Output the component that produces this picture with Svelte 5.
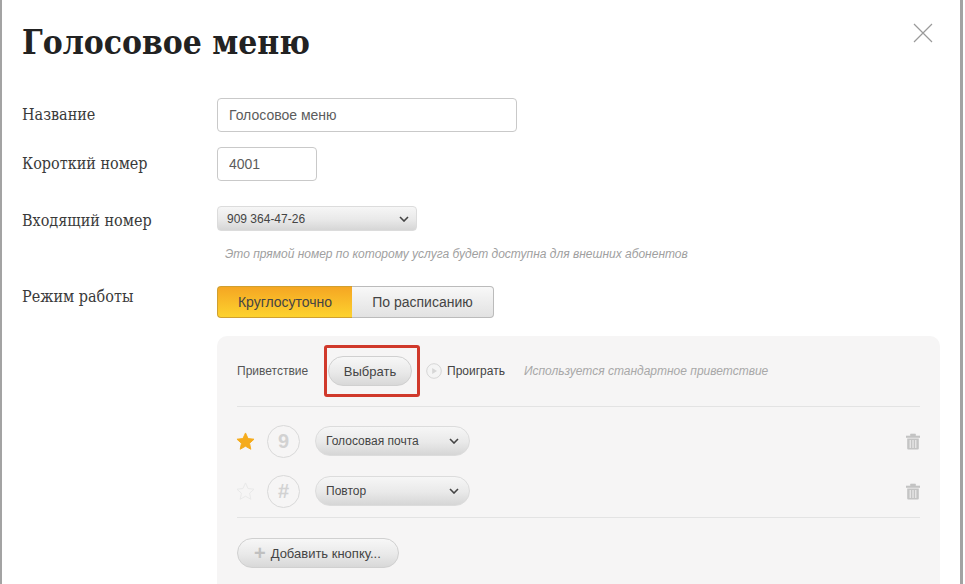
<script>
  const rows = [
    { key: '9', action: 'Голосовая почта', starred: true },
    { key: '#', action: 'Повтор', starred: false }
  ];
</script>

<div class="page">
  <div class="modal">
    <div class="head">
      <h1>Голосовое меню</h1>
      <svg class="close" width="20" height="20" viewBox="0 0 20 20">
        <path d="M1 1 L19 19 M19 1 L1 19" stroke="#9a9a9a" stroke-width="1.2" fill="none" />
      </svg>
    </div>

    <div class="field name">
      <span class="label">Название</span>
      <input class="input wide" value="Голосовое меню" />
    </div>
    <div class="field short">
      <span class="label">Короткий номер</span>
      <input class="input narrow" value="4001" />
    </div>
    <div class="field incoming">
      <span class="label">Входящий номер</span>
      <div class="select number">
        <span>909 364-47-26</span>
        <svg width="10" height="6" viewBox="0 0 10 6"><path d="M1 1 L5 5 L9 1" stroke="#444" stroke-width="1.6" fill="none" /></svg>
      </div>
    </div>
    <p class="hint">Это прямой номер по которому услуга будет доступна для внешних абонентов</p>

    <div class="field mode">
      <span class="label">Режим работы</span>
      <div class="segments">
        <span class="seg active">Круглосуточно</span>
        <span class="seg">По расписанию</span>
      </div>
    </div>

    <div class="panel">
      <div class="greeting">
        <span class="greet-label">Приветствие</span>
        <div class="highlight"><span class="pill choose">Выбрать</span></div>
        <svg class="play" width="16" height="16" viewBox="0 0 16 16">
          <circle cx="8" cy="8" r="7.3" fill="#f4f4f4" stroke="#d6d6d6" />
          <path d="M6.2 5 L11 8 L6.2 11 Z" fill="#d6d6d6" />
        </svg>
        <span class="play-label">Проиграть</span>
        <em class="note">Используется стандартное приветствие</em>
      </div>

      <div class="keys">
        {#each rows as row}
          <div class="key-row">
            <svg class="star" width="19" height="18" viewBox="0 0 20 19">
              <path
                d="M10 1 L12.7 6.9 L19 7.6 L14.3 11.9 L15.6 18.2 L10 15 L4.4 18.2 L5.7 11.9 L1 7.6 L7.3 6.9 Z"
                fill={row.starred ? '#f5ab1c' : 'none'}
                stroke={row.starred ? '#f5ab1c' : '#e8e8e8'}
              />
            </svg>
            <span class="digit">{row.key}</span>
            <div class="select action">
              <span>{row.action}</span>
              <svg width="10" height="6" viewBox="0 0 10 6"><path d="M1 1 L5 5 L9 1" stroke="#444" stroke-width="1.6" fill="none" /></svg>
            </div>
            <svg class="trash" width="14" height="17" viewBox="0 0 14 17">
              <path d="M0 3 H14 V4.5 H0 Z M4.5 3 V1 H9.5 V3" fill="#c4c4c4" stroke="#c4c4c4" stroke-width="0.6" />
              <path d="M1.2 5.5 H12.8 V15.5 Q12.8 16.6 11.7 16.6 H2.3 Q1.2 16.6 1.2 15.5 Z" fill="#c4c4c4" />
              <path d="M4.2 7 V15 M7 7 V15 M9.8 7 V15" stroke="#f5f4f4" stroke-width="1" />
            </svg>
          </div>
        {/each}
      </div>

      <div class="add-row">
        <span class="pill add"><b>+</b>Добавить кнопку...</span>
      </div>
    </div>
  </div>
</div>

<style>
  :global(body) {
    margin: 0;
    background: #fff;
  }

  .page {
    width: 965px;
    height: 584px;
    overflow: hidden;
    font-family: "Liberation Sans", Arial, sans-serif;
    color: #333;
  }

  .modal {
    box-sizing: border-box;
    width: 963px;
    height: 584px;
    border-left: 2px solid #a3a3a3;
    border-right: 3px solid #a3a3a3;
    padding-left: 20px;
  }

  .head {
    display: flex;
    justify-content: space-between;
    height: 86px;
  }

  h1 {
    margin: 21px 0 0;
    font-family: "DejaVu Serif Condensed", "DejaVu Serif", serif;
    font-size: 33.3px;
    line-height: 44px;
    font-weight: 700;
    color: #222;
  }

  .close {
    margin: 23px 27px 0 0;
  }

  .field {
    display: flex;
    align-items: center;
  }

  .label {
    width: 195px;
    font-family: "DejaVu Serif Condensed", "DejaVu Serif", serif;
    font-size: 16px;
    color: #3a3a3a;
  }

  .name {
    margin-top: 12px;
  }

  .name .label,
  .short .label {
    padding-bottom: 2px;
  }

  .short {
    margin-top: 15px;
  }

  .incoming {
    margin-top: 25px;
  }

  .incoming .label {
    padding-top: 3px;
  }

  .mode {
    margin-top: 24px;
    align-items: flex-start;
  }

  .mode .label {
    padding-top: 1px;
  }

  .input {
    box-sizing: border-box;
    height: 34px;
    padding: 0 11px;
    border: 1px solid #c9c9c9;
    border-radius: 4px;
    background: #fff;
    font: 14px "Liberation Sans", Arial, sans-serif;
    color: #5c5c5c;
    outline: none;
  }

  .wide {
    width: 300px;
  }

  .narrow {
    width: 100px;
  }

  .select {
    box-sizing: border-box;
    display: flex;
    align-items: center;
    justify-content: space-between;
    background: linear-gradient(#f6f6f6, #e9e9e9 55%, #d6d6d6);
    border: 1px solid #dcdcdc;
    color: #444;
    font-size: 12px;
  }

  .number {
    width: 200px;
    height: 25px;
    padding: 0 7px 0 9px;
    border-radius: 4px;
  }

  .hint {
    margin: 15px 0 0 203px;
    font-size: 12px;
    font-style: italic;
    line-height: 16px;
    color: #a0a0a0;
  }

  .segments {
    display: flex;
    height: 32px;
    font-size: 14px;
  }

  .seg {
    box-sizing: border-box;
    display: flex;
    align-items: center;
    justify-content: center;
    width: 142px;
    border: 1px solid #bbb;
    border-left: 0;
    border-radius: 0 4px 4px 0;
    background: linear-gradient(#f8f8f8, #e2e2e2);
    color: #444;
  }

  .seg.active {
    width: 135px;
    border: 1px solid #d0a030;
    border-right: 0;
    border-radius: 4px 0 0 4px;
    background: linear-gradient(#f5a623, #fdd22e);
  }

  .panel {
    box-sizing: border-box;
    width: 723px;
    height: 260px;
    margin: 18px 0 0 195px;
    padding: 0 20px;
    border-radius: 10px 10px 0 0;
    background: #f6f5f5;
  }

  .greeting {
    display: flex;
    align-items: center;
    height: 70px;
    border-bottom: 1px solid #e3e3e3;
  }

  .greet-label {
    width: 87px;
    font-size: 12px;
    color: #555;
  }

  .highlight {
    display: flex;
    box-sizing: border-box;
    padding: 8px 5px 8px 1px;
    border: 3px solid #d0392b;
    border-radius: 3px;
  }

  .pill {
    box-sizing: border-box;
    display: inline-flex;
    align-items: center;
    height: 30px;
    border: 1px solid #d0d0d0;
    border-radius: 15px;
    background: linear-gradient(#f7f7f7, #e9e9e9 55%, #d8d8d8);
    font-size: 13px;
    color: #444;
  }

  .choose {
    width: 84px;
    justify-content: center;
  }

  .play {
    margin-left: 6px;
  }

  .play-label {
    margin-left: 5px;
    font-size: 12px;
    color: #444;
  }

  .note {
    margin-left: 19px;
    font-size: 12px;
    color: #a8a8a8;
  }

  .keys {
    padding: 9px 0 1px;
    border-bottom: 1px solid #e3e3e3;
  }

  .key-row {
    display: flex;
    align-items: center;
    height: 50px;
  }

  .star {
    margin: 0 12px 0 -1px;
  }

  .digit {
    box-sizing: border-box;
    display: flex;
    align-items: center;
    justify-content: center;
    width: 33px;
    height: 33px;
    border: 1px solid #d9d9d9;
    border-radius: 50%;
    font-size: 20px;
    font-weight: 700;
    color: #d2d2d2;
  }

  .action {
    width: 155px;
    height: 30px;
    margin-left: 15px;
    padding: 0 10px;
    border-radius: 15px;
  }

  .trash {
    margin-left: auto;
  }

  .add-row {
    padding-top: 20px;
  }

  .add {
    width: 162px;
    padding-left: 16px;
    font-size: 13px;
  }

  .add b {
    margin-right: 5px;
    font-size: 20px;
    line-height: 20px;
    color: #c0c0c0;
  }
</style>
